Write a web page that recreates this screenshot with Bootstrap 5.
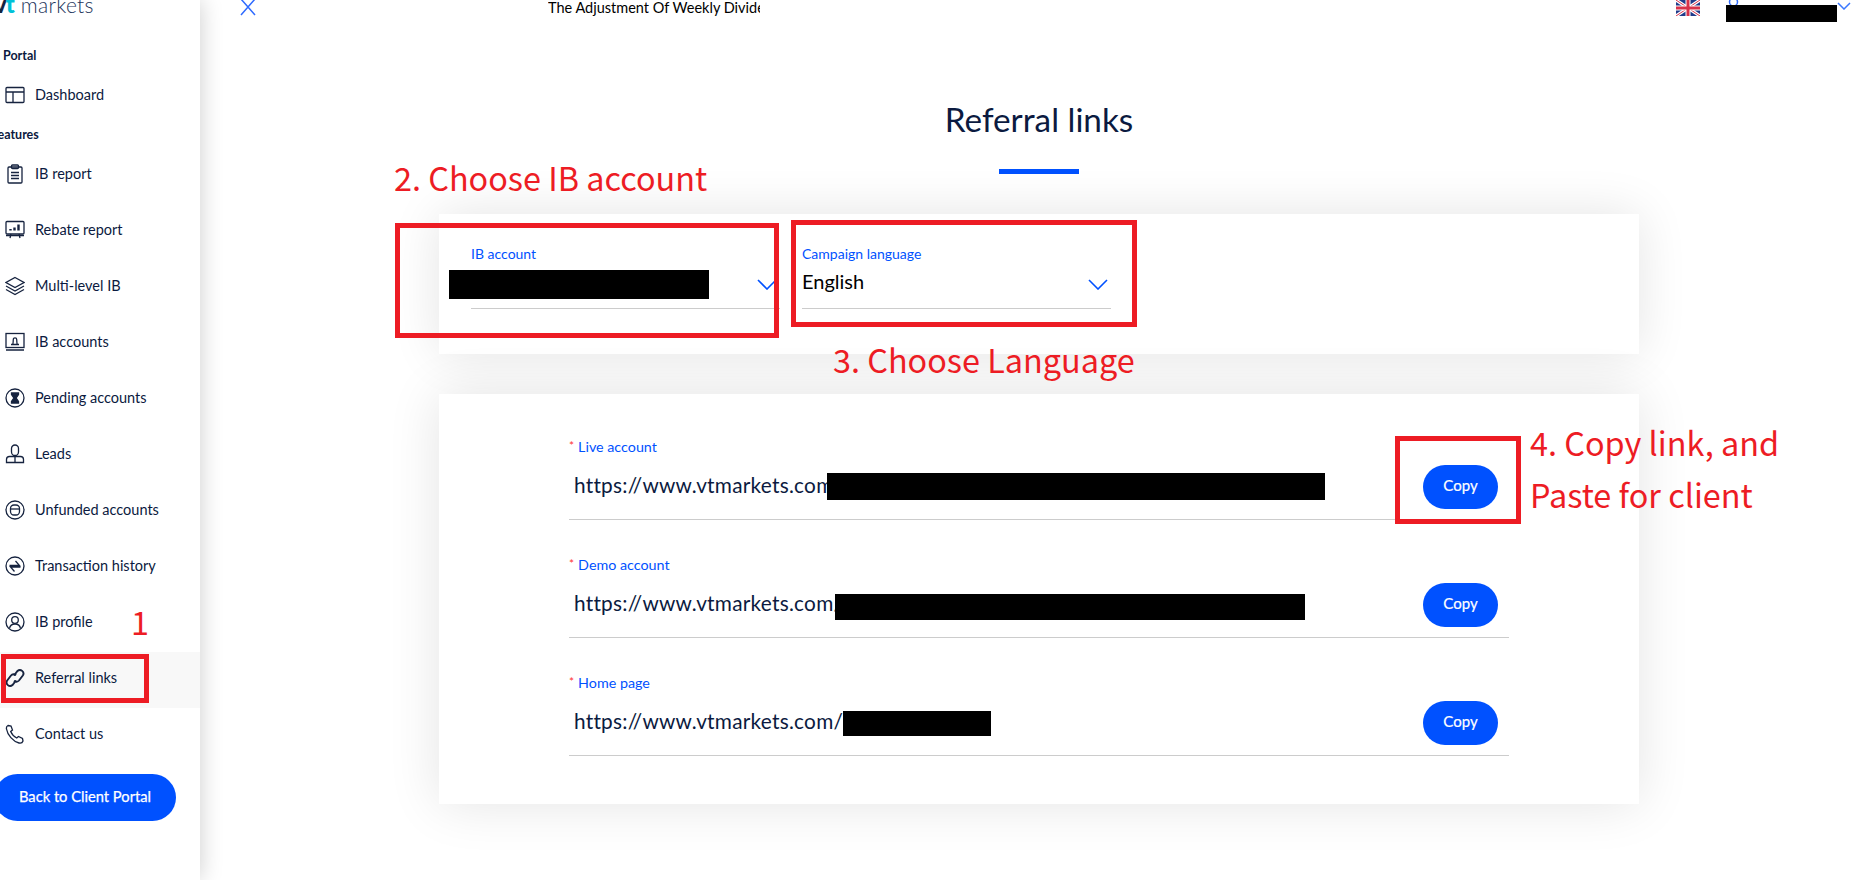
<!DOCTYPE html>
<html lang="en">
<head>
<meta charset="utf-8">
<title>Referral links</title>
<link href="https://cdn.jsdelivr.net/npm/bootstrap@5.3.0/dist/css/bootstrap.min.css" rel="stylesheet">
<style>
html,body{height:880px;overflow:hidden;background:#fff;}
body{font-family:Lato,"Liberation Sans",sans-serif;color:#0b1a40;position:relative;}
.side{width:200px;height:880px;flex:none;box-shadow:0 0 22px rgba(0,0,0,.2);background:#fff;position:relative;z-index:2;}
.logo-wrap{height:46px;overflow:hidden;}
.logo-txt{font-size:21px;line-height:21px;margin-top:-7px;margin-left:-6px;white-space:nowrap;color:#24365c;font-weight:300;letter-spacing:.3px;}
.logo-txt b{font-size:24px;font-weight:900;letter-spacing:-1px;margin-right:7px;color:#14233f;}
.logo-txt b i{font-style:normal;color:#00c2d8;}
.side-head{font-size:12.500px;font-weight:700;height:20px;line-height:20px;padding-left:3px;}
.head-b{height:23px;line-height:20px;padding-left:0;margin-left:-9px;}
.side-gap{height:3px;}
.side-link{height:56px;display:flex;align-items:center;gap:10px;padding:0 0 5px 5px;font-size:14.500px;color:#0b1a40;text-decoration:none;}
.side-link svg{width:20px;height:20px;flex:none;fill:none;stroke:#16233f;stroke-width:1.3;}
.side-link svg .bars{stroke-width:2.400;}
.side-link svg .solid{fill:#16233f;}
.side-link svg.chain{stroke-width:1.900;}
.side-link.on{background:#f8f8f8;}
.back-btn{display:block;width:182px;height:47px;margin:10px 0 0 -6px;background:#0051ff;border:0;border-radius:24px;color:#fff;font-size:14.700px;font-weight:400;line-height:44px;padding:0 0 3px;-webkit-text-stroke:.25px #fff;}
.main-area{width:1659px;}
.topbar{height:16px;overflow:visible;padding-left:40px;}
.x-ico{width:16px;height:16px;flex:none;stroke:#2f6bff;stroke-width:1.500;fill:none;}
.ticker{width:212px;margin-left:292px;height:16px;line-height:15px;font-size:14.500px;overflow:hidden;white-space:nowrap;color:#000;}
.flag{width:24px;height:16px;margin-left:916px;flex:none;}
.user-ico{width:13px;height:16px;margin-left:26px;flex:none;fill:none;stroke:#2f6bff;stroke-width:1.500;}
.chev-top{width:14px;height:8px;margin-left:98px;flex:none;fill:none;stroke:#3b78ff;stroke-width:1.500;margin-top:2px;}
.content-col{width:1200px;margin-left:239px;}
.page-title{font-size:33.300px;font-weight:400;line-height:40px;text-align:center;margin:83px 0 0;color:#0b1a40;}
.title-bar{width:80px;height:5px;background:#0051ff;margin:30px auto 0;}
.panel{background:#fff;border:0;border-radius:0;box-shadow:0 0 50px rgba(0,0,0,.11);}
.panel-top{height:140px;margin-top:40px;padding:30px 0 0 32px;gap:22px;}
.sel-field{width:309px;height:65px;border-bottom:1px solid #ccc;position:relative;}
.sel-label{font-size:14px;line-height:20px;color:#0051ff;margin:0;display:block;}
.sel-value{font-size:20px;line-height:28px;margin-top:3px;color:#000;}
.sel-chev{width:20px;height:11px;fill:none;stroke:#0051ff;stroke-width:1.600;position:absolute;right:3px;top:35px;}
.panel-links{height:410px;margin-top:40px;padding:42px 130px 0;}
.link-row{margin-bottom:34px;}
.star{color:#f33;font-size:12px;margin-right:4px;vertical-align:2px;}
.link-label{font-size:14.300px;line-height:20px;color:#0051ff;margin:0;display:block;}
.link-val{height:63px;border-bottom:1px solid #ccc;padding:0 11px 0 5px;}
.link-txt{font-size:20.800px;line-height:28px;color:#0b1a40;padding-bottom:6px;letter-spacing:.25px;}
.copy-btn{width:75px;height:44px;border-radius:22px;background:#0051ff;border:0;color:#fff;font-size:15px;font-weight:400;padding:0 0 3px;margin-bottom:2px;-webkit-text-stroke:.2px #fff;}
.mark-box{position:absolute;border:5px solid #ed1c24;z-index:5;}
.note{position:absolute;color:#ed1c24;font-family:"Noto Sans CJK TC","Noto Sans",sans-serif;font-size:32.400px;line-height:44px;font-weight:400;white-space:nowrap;z-index:6;}
.redact{position:absolute;background:#000;z-index:4;}
</style>
</head>
<body>
<div class="d-flex">
  <aside class="side">
    <div class="logo-wrap"><div class="logo-txt"><b>v<i>t</i></b>markets</div></div>
    <div class="side-head">Portal</div>
    <div class="side-gap"></div>
    <a class="side-link" href="#"><svg viewBox="0 0 20 20"><rect x="1" y="2.500" width="18" height="15" rx="1"/><path d="M1 7h18M8 7v10.500"/></svg>Dashboard</a>
    <div class="side-head head-b">Features</div>
    <a class="side-link" href="#"><svg viewBox="0 0 20 20"><rect x="3" y="3" width="14" height="16" rx="1"/><rect x="6.500" y="1" width="7" height="3.500" rx="1"/><path d="M6 8.500h8M6 11.500h8M6 14.500h8"/></svg>IB report</a>
    <a class="side-link" href="#"><svg viewBox="0 0 20 20"><rect x="1" y="1.500" width="18" height="12.500" rx="1"/><path d="M6 14l-1 4M14 14l1 4M1 15.500h18"/><path class="bars" d="M5.500 10.500V9M9.500 10.500V7.500M13.500 10.500V4.500"/></svg>Rebate report</a>
    <a class="side-link" href="#"><svg viewBox="0 0 20 20"><path d="M10 1.500l9 5-9 5-9-5zM1 10l9 5 9-5M1 13.500l9 5 9-5"/></svg>Multi-level IB</a>
    <a class="side-link" href="#"><svg viewBox="0 0 20 20"><rect x="1" y="1.500" width="18" height="14"/><path d="M1 18h18M6 12.500h8M7.500 12.500c1-1 .5-3 .8-5a1.700 1.700 0 0 1 3.400 0c.3 2-.2 4 .8 5"/></svg>IB accounts</a>
    <a class="side-link" href="#"><svg viewBox="0 0 20 20"><circle cx="10" cy="10" r="9"/><path class="solid" d="M6.500 5h7v1.500L11 10l2.500 3.500V15h-7v-1.500L9 10 6.500 6.500z"/></svg>Pending accounts</a>
    <a class="side-link" href="#"><svg viewBox="0 0 20 20"><path d="M6.500 8V4.500a3.500 3.500 0 0 1 7 0V8a3.500 3.500 0 0 1-7 0z"/><path d="M1.500 18.500v-3a3 3 0 0 1 3-3h11a3 3 0 0 1 3 3v3zM10 12.500v6"/></svg>Leads</a>
    <a class="side-link" href="#"><svg viewBox="0 0 20 20"><circle cx="10" cy="10" r="9"/><rect x="5.500" y="5" width="9" height="10" rx="3.500"/><path d="M5.500 9h9"/></svg>Unfunded accounts</a>
    <a class="side-link" href="#"><svg viewBox="0 0 20 20"><circle cx="10" cy="10" r="9"/><path d="M4.500 9.500h10L10.500 5M15.500 11H5.500l4 4.500"/></svg>Transaction history</a>
    <a class="side-link" href="#"><svg viewBox="0 0 20 20"><circle cx="10" cy="10" r="9"/><circle cx="10" cy="8" r="3.300"/><path d="M4.500 16.500c.5-3 2.500-4.500 5.500-4.500s5 1.500 5.500 4.500"/></svg>IB profile</a>
    <a class="side-link on" href="#"><svg class="chain" viewBox="0 0 20 20"><path d="M9 7.500l3.500-4.500a3.500 3.500 0 0 1 5.300 4.500L14 12.500a3.500 3.500 0 0 1-5 .3"/><path d="M11 12.500L7.500 17a3.500 3.500 0 0 1-5.300-4.500L6 7.500a3.500 3.500 0 0 1 5-.3"/></svg>Referral links</a>
    <a class="side-link" href="#"><svg viewBox="0 0 20 20"><path d="M3 1.500l3 .5 1.500 4-1.800 1.500c1 2.500 3 5 6 6.500l1.800-1.500 4 2 .5 2.500c-.5 1.500-2 2.500-4 2C8 17.500 2.500 11 1.500 5c-.3-1.500.5-3 1.500-3.500z"/></svg>Contact us</a>
    <button class="back-btn btn" type="button">Back to Client Portal</button>
  </aside>
  <main class="main-area">
    <div class="topbar d-flex align-items-start">
      <svg class="x-ico" viewBox="0 0 16 16"><path d="M1-1l14 16M15-1L1 15"/></svg>
      <div class="ticker">The Adjustment Of Weekly Dividends</div>
      <svg class="flag" viewBox="0 0 24 16"><rect width="24" height="16" fill="#1f3a8a"/><path d="M0 0l24 16M24 0L0 16" stroke="#fff" stroke-width="3.200"/><path d="M0 0l24 16M24 0L0 16" stroke="#d8324a" stroke-width="1"/><path d="M12 0v16M0 8h24" stroke="#fff" stroke-width="5"/><path d="M12 0v16M0 8h24" stroke="#d8324a" stroke-width="3"/></svg>
      <svg class="user-ico" viewBox="0 0 13 16"><circle cx="7.500" cy="2" r="4"/></svg>
      <svg class="chev-top" viewBox="0 0 14 8"><path d="M1 1l6 6 6-6"/></svg>
    </div>
    <div class="content-col">
      <h1 class="page-title">Referral links</h1>
      <div class="title-bar"></div>
      <section class="panel panel-top card d-flex flex-row">
        <div class="sel-field">
          <label class="sel-label">IB account</label>
          <svg class="sel-chev" viewBox="0 0 20 11"><path d="M1 1l9 9 9-9"/></svg>
        </div>
        <div class="sel-field">
          <label class="sel-label">Campaign language</label>
          <div class="sel-value">English</div>
          <svg class="sel-chev" viewBox="0 0 20 11"><path d="M1 1l9 9 9-9"/></svg>
        </div>
      </section>
      <section class="panel panel-links card">
        <div class="link-row">
          <label class="link-label"><span class="star">*</span>Live account</label>
          <div class="link-val d-flex justify-content-between align-items-center"><span class="link-txt">https://www.vtmarkets.com/</span><button class="copy-btn btn" type="button">Copy</button></div>
        </div>
        <div class="link-row">
          <label class="link-label"><span class="star">*</span>Demo account</label>
          <div class="link-val d-flex justify-content-between align-items-center"><span class="link-txt">https://www.vtmarkets.com/</span><button class="copy-btn btn" type="button">Copy</button></div>
        </div>
        <div class="link-row">
          <label class="link-label"><span class="star">*</span>Home page</label>
          <div class="link-val d-flex justify-content-between align-items-center"><span class="link-txt">https://www.vtmarkets.com/</span><button class="copy-btn btn" type="button">Copy</button></div>
        </div>
      </section>
    </div>
  </main>
</div>

<div class="redact" style="left:1726px;top:5px;width:111px;height:17px"></div>
<div class="redact" style="left:449px;top:270px;width:260px;height:29px"></div>
<div class="redact" style="left:827px;top:473px;width:498px;height:27px"></div>
<div class="redact" style="left:835px;top:594px;width:470px;height:26px"></div>
<div class="redact" style="left:843px;top:711px;width:148px;height:25px"></div>

<div class="mark-box" style="left:1px;top:654px;width:148px;height:49px"></div>
<div class="mark-box" style="left:395px;top:223px;width:384px;height:115px"></div>
<div class="mark-box" style="left:791px;top:220px;width:346px;height:107px"></div>
<div class="mark-box" style="left:1395px;top:436px;width:126px;height:88px"></div>

<div class="note" style="left:131px;top:599px">1</div>
<div class="note" style="left:394px;top:155px">2. Choose IB account</div>
<div class="note" style="left:833px;top:337px">3. Choose Language</div>
<div class="note" style="left:1530px;top:420px">4. Copy link, and</div>
<div class="note" style="left:1530px;top:472px">Paste for client</div>

<script src="https://cdn.jsdelivr.net/npm/bootstrap@5.3.0/dist/js/bootstrap.bundle.min.js"></script>
</body>
</html>
